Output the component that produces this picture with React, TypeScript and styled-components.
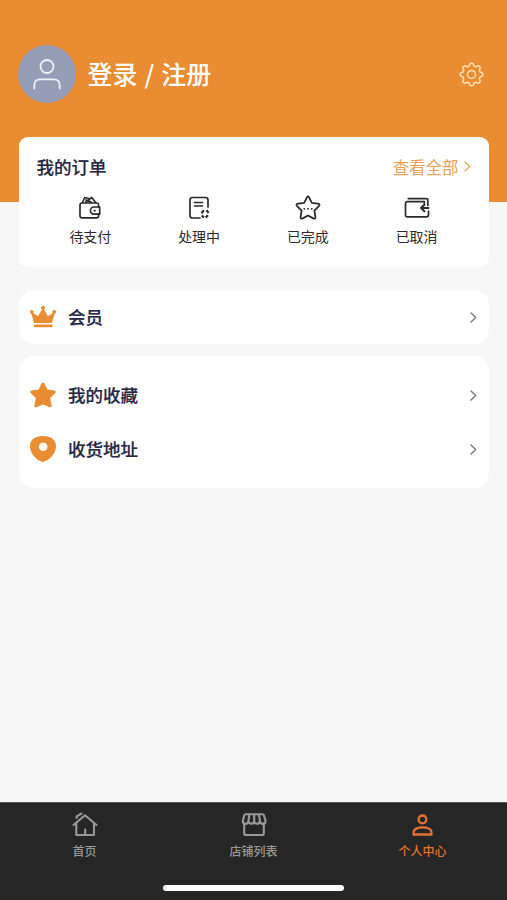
import React from "react";
import styled, { createGlobalStyle } from "styled-components";

const GlobalStyle = createGlobalStyle`
  * { box-sizing: border-box; }
  body { margin: 0; background: #f7f7f7; }
  svg { display: block; flex: none; }
`;

const orange = "#ea8d32";
const navy = "#252744";

const Page = styled.div`
  height: 900px;
  display: flex;
  flex-direction: column;
  overflow: hidden;
  font-family: "Noto Sans CJK SC", sans-serif;
  background: linear-gradient(${orange} 0 202px, #f7f7f7 202px);
`;

const Header = styled.header`
  height: 137px;
  padding: 45px 23.5px 0 18px;
  display: flex;
  align-items: flex-start;
`;

const Avatar = styled.div`
  width: 58px;
  height: 58px;
  border-radius: 50%;
  background: #969db6;
  display: flex;
  align-items: center;
  justify-content: center;
`;

const LoginLink = styled.div`
  margin-left: 11.5px;
  flex: 1;
  color: #fff;
  font-size: 25px;
  font-weight: 500;
  line-height: 56px;
  word-spacing: 1.4px;
  white-space: pre;
`;

const Settings = styled.div`
  height: 58px;
  display: flex;
  align-items: center;
`;

const Content = styled.main`
  flex: 1;
  padding: 0 18px 0 19px;
`;

const Card = styled.section<{ $height: number; $gap: number; $radius: number }>`
  height: ${(p) => p.$height}px;
  margin-bottom: ${(p) => p.$gap}px;
  border-radius: ${(p) => p.$radius}px;
  background: #fff;
  display: flex;
  flex-direction: column;
  justify-content: center;
`;

const OrdersHead = styled.div`
  height: 58px;
  padding: 1px 18.5px 0 17.5px;
  display: flex;
  align-items: center;
  justify-content: space-between;
`;

const Title = styled.div`
  font-size: 17.5px;
  font-weight: 500;
  line-height: 26px;
  color: ${navy};
  -webkit-text-stroke: 0.2px ${navy};
`;

const ViewAll = styled.div`
  display: flex;
  align-items: center;
  gap: 5px;
  font-size: 16.5px;
  line-height: 24px;
  color: #e9a058;
`;

const Statuses = styled.div`
  flex: 1;
  padding: 0 18px 0 17px;
  display: grid;
  grid-template-columns: repeat(4, 1fr);
`;

const Status = styled.div`
  display: flex;
  flex-direction: column;
  align-items: center;
  font-size: 14px;
  line-height: 20px;
  color: #2b2b2b;
  gap: 5px;
`;

const Row = styled.div`
  height: 54px;
  padding: 0 12.5px 0 11px;
  display: flex;
  align-items: center;
`;

const RowLabel = styled(Title)`
  flex: 1;
  margin-left: 12px;
`;

const TabBar = styled.nav`
  height: 98px;
  background: #262626;
  border-top: 1px solid #555;
  display: flex;
  flex-direction: column;
  align-items: center;
`;

const Tabs = styled.div`
  width: 100%;
  height: 84px;
  display: grid;
  grid-template-columns: repeat(3, 1fr);
`;

const Tab = styled.div<{ $active?: boolean }>`
  padding-top: 6px;
  display: flex;
  flex-direction: column;
  align-items: center;
  gap: 3px;
  font-size: 12px;
  font-weight: 500;
  line-height: 17px;
  color: ${(p) => (p.$active ? "#e47435" : "#999")};
`;

const HomeIndicator = styled.div`
  width: 181px;
  height: 6px;
  border-radius: 3px;
  background: #fff;
  margin-top: -2px;
`;

const line = {
  fill: "none",
  stroke: "currentColor",
  strokeLinecap: "round" as const,
  strokeLinejoin: "round" as const,
};

const gearPath = (() => {
  const points: string[] = [];
  for (let i = 0; i < 160; i++) {
    const a = (i / 160) * Math.PI * 2;
    const r = 10 + (1.25 * Math.tanh(1.6 * Math.cos(8 * a))) / Math.tanh(1.6);
    points.push(`${(12.5 + r * Math.sin(a)).toFixed(2)} ${(12.5 - r * Math.cos(a)).toFixed(2)}`);
  }
  return `M${points.join("L")}Z`;
})();

const GearIcon = () => (
  <svg width="25" height="25" viewBox="0 0 25 25" {...line} stroke="#ffe3bd" strokeWidth="1.5">
    <path d={gearPath} />
    <circle cx="12.5" cy="12.500" r="4" />
  </svg>
);

const PersonIcon = () => (
  <svg width="30" height="32" viewBox="0 0 30 32" {...line} stroke="#eef1fa" strokeWidth="1.8">
    <circle cx="15" cy="8.500" r="6.500" />
    <path d="M2.300 30.500v-3.200c0-3.800 2.200-6 6-6h13.400c3.800 0 6 2.200 6 6v3.200" />
  </svg>
);

const Chevron = ({ pale }: { pale?: boolean }) => (
  <svg width="7" height="11" viewBox="0 0 7 11" {...line} stroke={pale ? "#e9a058" : "#777"} strokeWidth={pale ? 1.2 : 1.4}>
    <path d="M1 1l4.700 4.500L1 10" />
  </svg>
);

const WalletIcon = () => (
  <svg width="26" height="26" viewBox="0 0 26 26" {...line} strokeWidth="1.700">
    <path d="M21.500 12V9.800c0-1.200-.7-1.800-1.800-1.800H5.200C3.800 8 3 8.700 3 10v10.700c0 1.300.8 2.100 2.200 2.100h14.500c1.100 0 1.800-.7 1.800-1.900v-1.700" />
    <path d="M22.700 12H17a3.600 3.600 0 0 0 0 7.200h5.700zM17.200 15.600h.8M5.500 7.500l2.200-5 4.500 1.300M8.700 7.200l6-4.700L18.700 7.500M9 5l5.500 2.400" />
  </svg>
);

const ProcessingIcon = () => (
  <svg width="26" height="26" viewBox="0 0 26 26" {...line} strokeWidth="1.700">
    <path d="M22 12V5c0-1.600-.8-2.500-2.500-2.500h-13C4.800 2.500 4 3.400 4 5v15.500c0 1.600.8 2.500 2.500 2.500H14M8.500 7.500h8M8.500 11h8" />
    <g strokeWidth="2.200" strokeLinecap="butt">
      <path d="M15.600 18.400l2.200-3.200M20.400 15.200l2.300 2.700M22 20.200l-2.300 2.400M17.900 22.600l-2.100-2.100" />
    </g>
  </svg>
);

const StarOutlineIcon = () => (
  <svg width="26" height="26" viewBox="0 0 26 26" {...line} strokeWidth="1.800">
    <path d="M11.900 2.400Q13 .5 14.100 2.400l2.700 5.500 6.200.8c1.600.3 1.900 1.400.9 2.500l-4.500 4.400 1 6.300c.2 1.500-.8 2-2.100 1.500L13 20.500l-5.300 2.900c-1.300.5-2.300 0-2.100-1.500l1-6.300-4.500-4.400c-1-1.100-.7-2.200.9-2.500l6.200-.8z" />
    <path d="M9.300 13.800h.1M13 13.800h.1M16.700 13.800h.1" strokeWidth="1.800" />
  </svg>
);

const CancelIcon = () => (
  <svg width="28" height="26" viewBox="0 0 28 26" {...line} strokeWidth="1.700">
    <path d="M24.800 10.500V4.800c0-.8-.4-1.200-1.200-1.200H5.300M25.500 16v3.800c0 1.300-.7 2-2 2H4.500c-1.300 0-2-.7-2-2V8.500c0-1.200.7-1.900 1.900-1.900h16.900v2" />
    <path d="M25.500 13H18M21.400 9.800L18 13l3.400 3.200" strokeWidth="2" />
  </svg>
);

const CrownIcon = () => (
  <svg width="26" height="26" viewBox="0 0 26 26" fill={orange}>
    <path d="M4 19L1.400 9.700a1.800 1.800 0 1 1 1.800-.7l4.900 3.200L12 5.600a2 2 0 1 1 2 0l3.900 6.600L22.800 9a1.800 1.800 0 1 1 1.800.7L22 19z" />
    <rect x="4" y="20.500" width="18.500" height="2.800" rx=".8" />
  </svg>
);

const StarIcon = () => (
  <svg width="26" height="26" viewBox="0 0 26 26" fill={orange} stroke={orange} strokeWidth="3" strokeLinejoin="round">
    <path d="M13 2l3.200 6.700 8 1.300-5.700 5.800 1.700 8L13 20.800l-7.200 3 1.700-8L1.800 10l8-1.300z" />
  </svg>
);

const PinIcon = () => (
  <svg width="26" height="28" viewBox="0 0 26 28" fill={orange}>
    <path fillRule="evenodd" d="M13 1C5.500 1 0 4.500 0 11.200c0 6.300 4.800 11.800 10.200 14.900 1.900 1.100 3.700 1.100 5.600 0C21.200 23 26 17.500 26 11.200 26 4.500 20.500 1 13 1zm.2 6.500a4.300 4.300 0 1 1 0 8.600 4.300 4.300 0 0 1 0-8.600z" />
  </svg>
);

const HomeIcon = () => (
  <svg width="28" height="30" viewBox="0 0 28 30" {...line} strokeWidth="2.100">
    <path d="M2.500 16L14 6.200 25.500 16M5.300 14v12h17.700V14M14.200 20.500V26M5.600 9V7.400L10.500 4.500" />
  </svg>
);

const ShopIcon = () => (
  <svg width="28" height="30" viewBox="0 0 28 30" {...line} strokeWidth="2.100">
    <path d="M4.200 14.500v9.700c0 1.200.6 1.800 1.800 1.800h16c1.200 0 1.800-.6 1.800-1.800v-9.700" />
    <path d="M5.500 5.300h17c.8 0 1.200.3 1.400 1l1.700 5.700c0 3.700-5 4-5.700 0-.5 3.600-5.400 3.600-5.700 0-.5 3.600-5.400 3.600-5.700 0-.7 4-5.700 3.700-5.700 0l1.500-5.700c.2-.7.5-1 1.200-1zM9.300 5.500L8.500 12M14.200 5.500V12M19 5.500l.9 6.500" />
  </svg>
);

const ProfileIcon = () => (
  <svg width="28" height="30" viewBox="0 0 28 30" {...line} strokeWidth="2.300">
    <circle cx="13.500" cy="10.400" r="3.900" />
    <path d="M4.600 25.500h17.800v-2.200c0-6.500-17.800-6.500-17.800 0z" strokeLinejoin="miter" />
  </svg>
);

const statuses = [
  { label: "待支付", icon: <WalletIcon /> },
  { label: "处理中", icon: <ProcessingIcon /> },
  { label: "已完成", icon: <StarOutlineIcon /> },
  { label: "已取消", icon: <CancelIcon /> },
];

const MenuRow = ({ icon, label }: { icon: React.ReactNode; label: string }) => (
  <Row>
    {icon}
    <RowLabel>{label}</RowLabel>
    <Chevron />
  </Row>
);

export default function App() {
  return (
    <Page>
      <GlobalStyle />
      <Header>
        <Avatar><PersonIcon /></Avatar>
        <LoginLink>登录 / 注册</LoginLink>
        <Settings><GearIcon /></Settings>
      </Header>
      <Content>
        <Card $height={130} $gap={23} $radius={9}>
          <OrdersHead>
            <Title>我的订单</Title>
            <ViewAll>查看全部 <Chevron pale /></ViewAll>
          </OrdersHead>
          <Statuses>
            {statuses.map((s) => (
              <Status key={s.label}>{s.icon}{s.label}</Status>
            ))}
          </Statuses>
        </Card>
        <Card $height={54} $gap={12} $radius={15}>
          <MenuRow icon={<CrownIcon />} label="会员" />
        </Card>
        <Card $height={132} $gap={0} $radius={15}>
          <MenuRow icon={<StarIcon />} label="我的收藏" />
          <MenuRow icon={<PinIcon />} label="收货地址" />
        </Card>
      </Content>
      <TabBar>
        <Tabs>
          <Tab><HomeIcon />首页</Tab>
          <Tab><ShopIcon />店铺列表</Tab>
          <Tab $active><ProfileIcon />个人中心</Tab>
        </Tabs>
        <HomeIndicator />
      </TabBar>
    </Page>
  );
}
